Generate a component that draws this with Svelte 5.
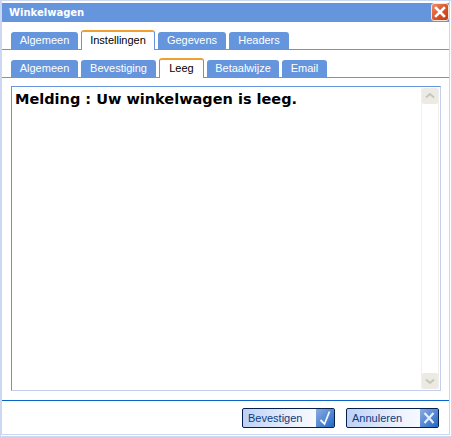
<script>
  const mainTabs = [
    { label: 'Algemeen', width: 67 },
    { label: 'Instellingen', width: 74, active: true },
    { label: 'Gegevens', width: 68 },
    { label: 'Headers', width: 60 }
  ];
  const subTabs = [
    { label: 'Algemeen', width: 67 },
    { label: 'Bevestiging', width: 75 },
    { label: 'Leeg', width: 45, active: true },
    { label: 'Betaalwijze', width: 72 },
    { label: 'Email', width: 45 }
  ];
</script>

{#snippet tabRow(tabs)}
  <div class="tabs">
    {#each tabs as tab}
      <div class="tab" class:active={tab.active} style="width: {tab.width}px">{tab.label}</div>
    {/each}
  </div>
{/snippet}

<div class="window">
  <div class="titlebar">
    <span class="title">Winkelwagen</span>
    <div class="close">
      <svg viewBox="0 0 16 16" width="16" height="16">
        <path d="M4 4 L12 12 M12 4 L4 12" stroke="#fff" stroke-width="2.6" stroke-linecap="square" fill="none" />
      </svg>
    </div>
  </div>

  <div class="body">
    {@render tabRow(mainTabs)}
    <div class="subrow">{@render tabRow(subTabs)}</div>

    <div class="content">
      <div class="message">Melding : Uw winkelwagen is leeg.</div>
      <div class="scrollbar">
        <div class="arrow">
          <svg viewBox="0 0 16 16" width="16" height="16">
            <path d="M4 9.5 L8 6 L12 9.5" stroke="#c3c8bc" stroke-width="2" fill="none" />
          </svg>
        </div>
        <div class="track"></div>
        <div class="arrow">
          <svg viewBox="0 0 16 16" width="16" height="16">
            <path d="M4 6.5 L8 10 L12 6.5" stroke="#c3c8bc" stroke-width="2" fill="none" />
          </svg>
        </div>
      </div>
    </div>
  </div>

  <div class="footer">
    <button class="btn">
      <span class="btn-label">Bevestigen</span>
      <span class="btn-icon">
        <svg viewBox="0 0 18 18" width="18" height="18">
          <path d="M4.5 11 L8.5 15 L13.5 2.5" stroke="#f2f6ff" stroke-width="1.8" fill="none" />
        </svg>
      </span>
    </button>
    <button class="btn">
      <span class="btn-label">Annuleren</span>
      <span class="btn-icon">
        <svg viewBox="0 0 18 18" width="18" height="18">
          <path d="M4.5 4 L13.5 14 M13.5 4 L4.5 14" stroke="#e6eefc" stroke-width="2.2" fill="none" />
        </svg>
      </span>
    </button>
  </div>
</div>

<style>
  :global(body) {
    background: #fff;
  }

  .window {
    width: 452px;
    height: 437px;
    box-sizing: border-box;
    background: #fff;
    border-top: 1px solid #ccd7f2;
    border-left: 2px solid #ccd7f2;
    border-right: 3px double #ccd7f2;
    border-bottom: 3px double #ccd7f2;
    display: flex;
    flex-direction: column;
    font-family: "Liberation Sans", Arial, sans-serif;
    font-size: 11px;
  }

  .titlebar {
    height: 19px;
    margin-top: 2px;
    background: #6495dd;
    display: flex;
    align-items: flex-start;
    justify-content: space-between;
    padding: 0 0 0 7px;
    flex-shrink: 0;
  }

  .title {
    color: #fff;
    font-family: "DejaVu Sans", sans-serif;
    font-weight: 700;
    font-size: 10px;
    line-height: 19px;
  }

  .close {
    width: 18px;
    height: 18px;
    border-radius: 3px;
    border: 1px solid #f6e4da;
    box-sizing: border-box;
    background: linear-gradient(135deg, #ee9070 0%, #dc5528 50%, #c23c10 100%);
    display: flex;
    align-items: center;
    justify-content: center;
  }

  .body {
    padding-top: 7px;
    display: flex;
    flex-direction: column;
  }

  .tabs {
    height: 20px;
    display: flex;
    align-items: flex-end;
    padding-left: 9px;
    gap: 3px;
    border-bottom: 1px solid #6495dd;
  }

  .subrow {
    margin-top: 7px;
  }

  .tab {
    height: 17px;
    box-sizing: border-box;
    background: #6495dd;
    color: #fff;
    border-radius: 3px 3px 0 0;
    text-align: center;
    line-height: 17px;
    white-space: nowrap;
  }

  .tab.active {
    height: 20px;
    margin-bottom: -1px;
    background: #fff;
    color: #000;
    border: 1px solid #6495dd;
    border-bottom: 0;
    border-top: 2px solid #f0a030;
    line-height: 17px;
  }

  .content {
    margin: 8px 9px 0;
    width: 430px;
    height: 305px;
    flex: none;
    box-sizing: border-box;
    border: 1px solid #6495dd;
    border-right-color: #c3cfec;
    border-bottom-color: #c3cfec;
    display: flex;
  }

  .message {
    flex: 1;
    padding: 4px 3px;
    font-family: "DejaVu Sans", sans-serif;
    font-weight: 700;
    font-size: 14.5px;
    color: #000;
  }

  .scrollbar {
    width: 16px;
    margin: 1px 1px 1px 0;
    display: flex;
    flex-direction: column;
    background: #fff;
    border-left: 1px solid #f1f0e8;
    border-right: 1px solid #f1f0e8;
  }

  .arrow {
    height: 16px;
    background: #eceae2;
    border-radius: 2px;
  }

  .track {
    flex: 1;
  }

  .footer {
    flex: 1;
    border-top: 1px solid #0a64c8;
    margin-top: 9px;
    display: flex;
    justify-content: flex-end;
    align-items: flex-start;
    gap: 11px;
    padding: 7px 10px 0 0;
  }

  .btn {
    width: 93px;
    height: 20px;
    padding: 0;
    box-sizing: border-box;
    border: 1px solid #04204f;
    border-radius: 2px;
    background: linear-gradient(to right, #bdd1f4 0%, #eef3fd 60%, #fff 100%);
    display: flex;
    align-items: stretch;
    font: inherit;
    color: #0a3c82;
  }

  .btn-label {
    flex: 1;
    text-align: left;
    padding-left: 5px;
    line-height: 18px;
  }

  .btn-icon {
    width: 18px;
    background: linear-gradient(135deg, #8bace2 0%, #2567c4 100%);
    display: flex;
  }
</style>
